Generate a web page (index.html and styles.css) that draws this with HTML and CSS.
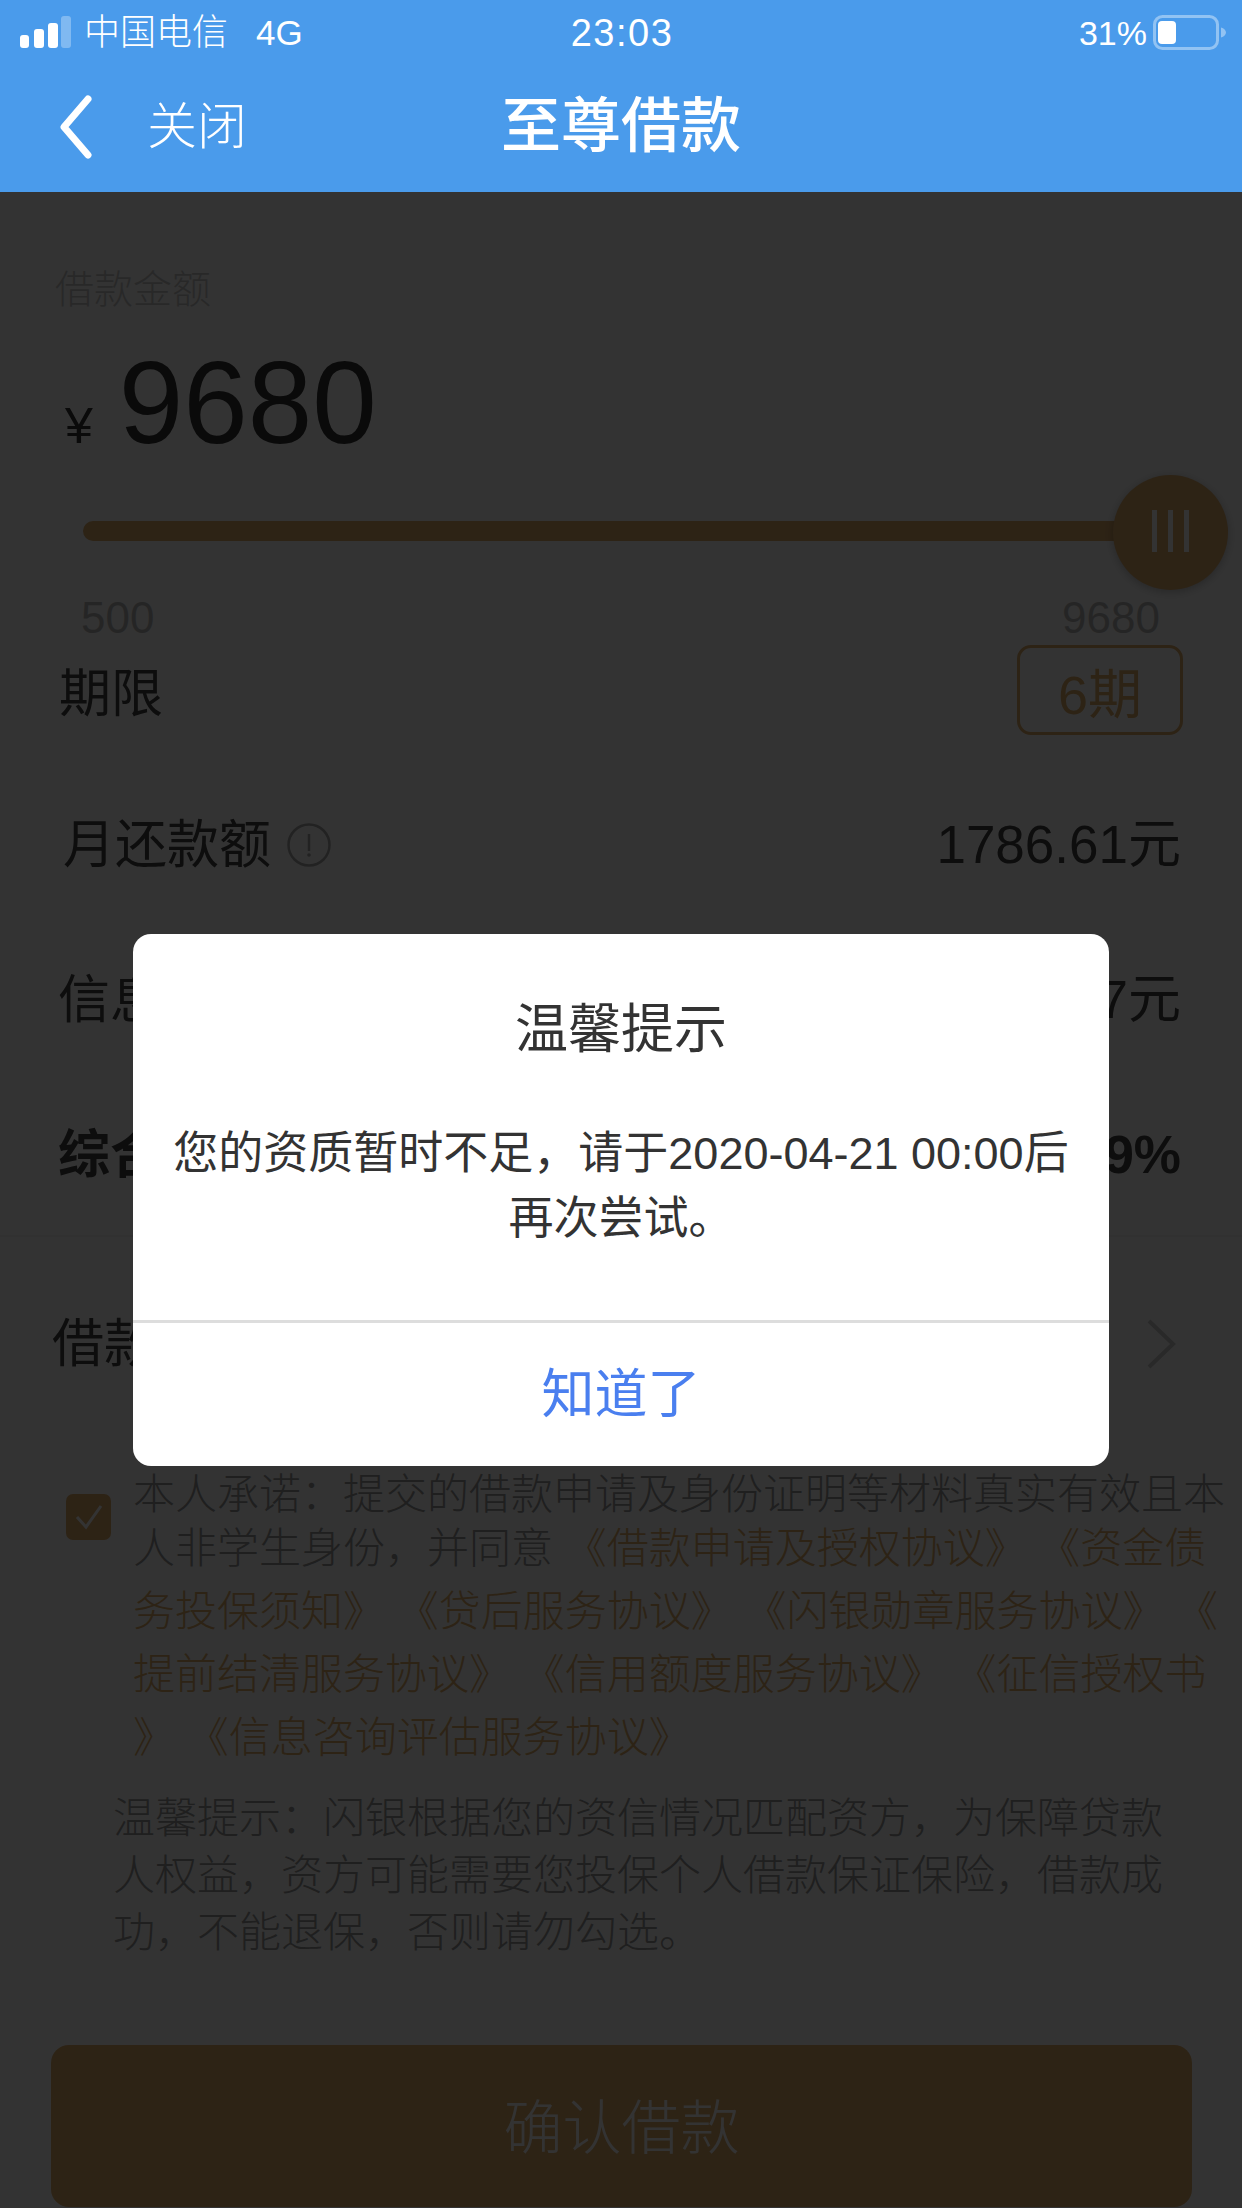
FILE: index.html
```html
<!DOCTYPE html>
<html lang="zh-CN">
<head>
<meta charset="utf-8">
<title>至尊借款</title>
<link rel="stylesheet" href="styles.css">
</head>
<body>
<div class="screen">
  <header class="header">
    <div class="status">
      <div class="status-left">
        <svg class="signal" width="52" height="34" viewBox="0 0 52 34"><rect x="0" y="19" width="9" height="13" rx="3" fill="#fff"/><rect x="14" y="13" width="10" height="19" rx="3" fill="#fff"/><rect x="28" y="7" width="10" height="25" rx="3" fill="#fff"/><rect x="41" y="0" width="10" height="32" rx="3" fill="#fff" fill-opacity=".3"/></svg>
        <span class="carrier">中国电信</span>
        <span class="net">4G</span>
      </div>
      <div class="time">23:03</div>
      <div class="status-right">
        <span class="percent">31%</span>
        <svg class="battery" width="74" height="36" viewBox="0 0 74 36"><rect x="1.5" y="1.5" width="63" height="32" rx="8" fill="none" stroke="#fff" stroke-opacity=".4" stroke-width="3"/><rect x="5" y="6" width="18" height="23" rx="4" fill="#fff"/><path d="M68 12.5c3 .8 5 2.800 5 5s-2 4.200-5 5z" fill="#fff" fill-opacity=".4"/></svg>
      </div>
    </div>
    <nav class="nav">
      <div class="nav-left">
        <svg class="back" width="36" height="64" viewBox="0 0 36 64"><path d="M30 4 6 32l24 28" fill="none" stroke="#fff" stroke-width="7" stroke-linecap="round" stroke-linejoin="round"/></svg>
        <span class="close">关闭</span>
      </div>
      <h1 class="title">至尊借款</h1>
      <div></div>
    </nav>
  </header>

  <main class="page">
    <div class="amount-label">借款金额</div>
    <div class="amount"><span class="yen">¥</span><span class="amount-value">9680</span></div>
    <div class="slider">
      <div class="track"></div>
      <div class="thumb"><i></i><i></i><i></i></div>
    </div>
    <div class="scale"><span>500</span><span>9680</span></div>
    <div class="term">
      <span class="term-label">期限</span>
      <span class="term-box">6期</span>
    </div>
    <div class="row row-first">
      <span class="row-label">月还款额<svg class="info" width="44" height="44" viewBox="0 0 44 44"><circle cx="22" cy="22" r="20.500" fill="none" stroke="#aaa" stroke-width="2.500"/><path d="M22 11v17" stroke="#aaa" stroke-width="2.500"/><circle cx="22" cy="32" r="1.800" fill="#aaa"/></svg></span>
      <span class="row-value">1786.61元</span>
    </div>
    <div class="row row-second">
      <span class="row-label">信息服务费</span>
      <span class="row-value">107.27元</span>
    </div>
    <div class="row row-bold">
      <span class="row-label">综合年化利率</span>
      <span class="row-value">35.99%</span>
    </div>
    <div class="row row-purpose">
      <span class="row-label">借款用途</span>
      <svg class="chevron" width="32" height="52" viewBox="0 0 32 52"><path d="M4 3l24 23L4 49" fill="none" stroke="#ccc" stroke-width="4"/></svg>
    </div>
    <div class="agree">
      <span class="check"><svg width="34" height="30" viewBox="0 0 34 30"><path d="M5 15l9 10L29 4" fill="none" stroke="#fff" stroke-width="3"/></svg></span>
      <p class="agree-text">本人承诺：提交的借款申请及身份证明等材料真实有效且本人非学生身份，并同意 <a>《借款申请及授权协议》</a> <a>《资金债务投保须知》</a> <a>《贷后服务协议》</a> <a>《闪银勋章服务协议》</a> <a>《提前结清服务协议》</a> <a>《信用额度服务协议》</a> <a>《征信授权书<wbr>》</a> <a>《信息咨询评估服务协议》</a></p>
    </div>
    <p class="tip">温馨提示：闪银根据您的资信情况匹配资方，为保障贷款人权益，资方可能需要您投保个人借款保证保险，借款成功，不能退保，否则请勿勾选。</p>
    <div class="confirm">确认借款</div>
  </main>

  <div class="overlay"></div>

  <div class="modal">
    <div class="modal-title">温馨提示</div>
    <p class="modal-body">您的资质暂时不足，请于2020-04-21 00:00后再次尝试。</p>
    <div class="modal-btn">知道了</div>
  </div>
</div>
</body>
</html>
```

FILE: styles.css
```css
* { box-sizing: border-box; margin: 0; padding: 0; }
html, body { width: 1242px; height: 2208px; overflow: hidden; }
body { font-family: "Liberation Sans", "Noto Sans CJK SC", sans-serif; font-weight: 300; background: #333; }
.screen { position: relative; width: 1242px; height: 2208px; overflow: hidden; background: #fff; }

.header { position: relative; z-index: 3; height: 192px; background: #4a9beb; color: #fff; }
.status { display: grid; grid-template-columns: 1fr auto 1fr; align-items: center; height: 64px; padding: 0 15px 0 20px; }
.status-left { display: flex; align-items: center; }
.carrier { margin-left: 12px; font-size: 36px; line-height: 66px; }
.net { margin-left: 28px; font-size: 35px; line-height: 64px; }
.time { margin-left: -3px; font-size: 38px; font-weight: 400; letter-spacing: 1.500px; line-height: 64px; }
.status-right { display: flex; align-items: center; justify-content: flex-end; }
.percent { font-size: 34px; line-height: 64px; margin-right: 6px; }
.battery { display: block; }

.nav { display: grid; grid-template-columns: 1fr auto 1fr; align-items: center; height: 128px; padding: 0 58px 2px; }
.nav-left { display: flex; align-items: center; }
.close { margin-left: 53px; font-size: 50px; line-height: 60px; }
.back { display: block; }
.title { font-size: 60px; line-height: 70px; font-weight: 500; }

.amount-label { margin-top: 73px; padding-left: 55px; font-size: 39px; line-height: 50px; color: #c8c8c8; }
.amount { display: flex; align-items: baseline; height: 130px; margin-top: 23px; padding-left: 65px; color: #333; }
.yen { font-size: 50px; line-height: 130px; }
.amount-value { margin-left: 26px; font-size: 116px; line-height: 130px; }

.slider { position: relative; display: flex; align-items: center; height: 115px; margin: 7px 14px 0 83px; }
.track { width: 100%; height: 20px; margin-top: -4px; border-radius: 10px; background: #e0ae6c; }
.thumb { position: absolute; top: 0; right: 0; display: flex; align-items: center; justify-content: center; gap: 11px; width: 115px; height: 115px; border-radius: 50%; background: #e0ae6c; box-shadow: 0 2px 10px rgba(0,0,0,.25); }
.thumb i { display: block; width: 5px; height: 42px; background: #fff; margin-top: -3px; }

.scale { display: flex; justify-content: space-between; height: 50px; padding: 0 82px 0 81px; margin-top: 3px; font-size: 44px; line-height: 50px; color: #bbb; }

.term { display: flex; justify-content: space-between; align-items: center; height: 90px; margin-top: 2px; padding: 0 59px; }
.term-label { font-size: 52px; font-weight: 400; line-height: 60px; margin-top: 8px; color: #444; }
.term-box { display: flex; align-items: center; justify-content: center; width: 166px; height: 90px; border: 3px solid #e0ae6c; border-radius: 14px; font-size: 54px; font-weight: 400; color: #e0ae6c; }

.row { display: flex; justify-content: space-between; align-items: center; height: 155px; padding: 0 61px 0 58px; font-size: 53px; font-weight: 400; line-height: 60px; color: #444; }
.row-first { margin-top: 32px; padding-left: 63px; }
.row-label { display: flex; align-items: center; font-size: 52px; }
.info { margin-left: 16px; }
.row-bold { font-weight: 700; }
.row-purpose { height: 215px; margin-top: 3px; padding: 0 65px 0 52px; border-top: 2px solid #f4f4f4; }

.agree { display: flex; align-items: flex-start; margin-top: 22px; padding-left: 66px; }
.check { display: flex; align-items: center; justify-content: center; flex: none; width: 45px; height: 46px; margin-top: 22px; border-radius: 7px; background: #e0ae6c; }
.agree-text { width: 1103px; margin-left: 22px; font-size: 42px; line-height: 45px; color: #999; line-break: anywhere; word-break: break-all; }
.agree-text a { line-height: 63px; color: #e0ae6c; }

.tip { width: 1075px; margin: 21px 0 0 113px; font-size: 42px; line-height: 57px; color: #999; }

.confirm { display: flex; align-items: center; justify-content: center; width: 1141px; height: 162px; margin: 84px 0 0 51px; padding-bottom: 5px; border-radius: 18px; background: #e0ae6c; font-size: 59px; color: #fff; }

.overlay { position: absolute; inset: 192px 0 0 0; z-index: 1; background: rgba(0,0,0,.8); }

.modal { position: absolute; top: 934px; left: 133px; z-index: 2; width: 976px; height: 532px; border-radius: 18px; background: #fff; color: #333; font-weight: 400; overflow: hidden; }
.modal-title { margin-top: 65px; font-size: 53px; line-height: 62px; text-align: center; }
.modal-body { height: 199px; margin-top: 60px; padding: 0 30px; font-size: 45px; line-height: 65px; text-align: center; }
.modal-btn { height: 148px; border-top: 3px solid #ddd; color: #4a7fef; font-size: 53px; line-height: 144px; text-align: center; }
```
